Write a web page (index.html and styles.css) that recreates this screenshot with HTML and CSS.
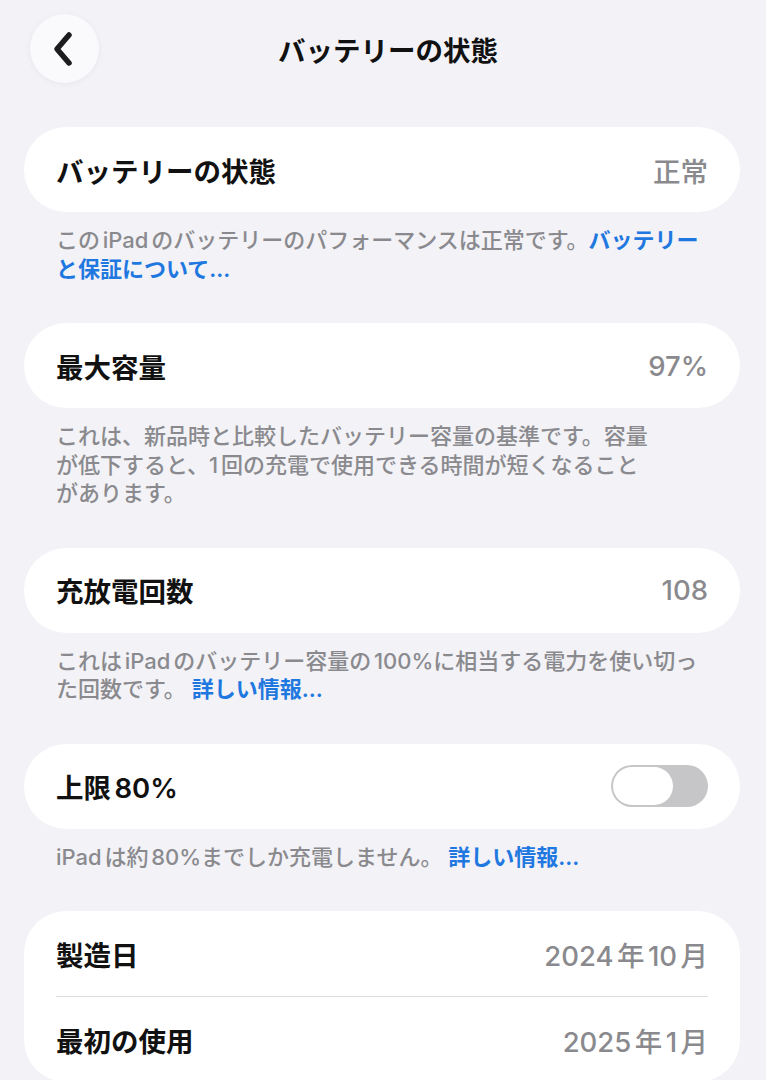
FILE: index.html
```html
<!DOCTYPE html>
<html lang="ja">
<head>
  <meta charset="utf-8">
  <title>バッテリーの状態</title>
  <link rel="stylesheet" href="styles.css">
</head>
<body>
  <div class="header">
    <button class="back" aria-label="戻る">
      <svg width="22" height="36" viewBox="0 0 22 36">
        <path d="M17 4 L5 18 L17 32" fill="none" stroke="#1c1c1e" stroke-width="5.5" stroke-linecap="round" stroke-linejoin="round"/>
      </svg>
    </button>
    <h1>バッテリーの状態</h1>
    <div></div>
  </div>

  <div class="content">
    <div class="card">
      <div class="row">
        <span class="label">バッテリーの状態</span>
        <span class="value">正常</span>
      </div>
    </div>
    <p class="note">このiPadのバッテリーのパフォーマンスは正常です。<a href="#">バッテリー<br>と保証について...</a></p>

    <div class="card">
      <div class="row">
        <span class="label">最大容量</span>
        <span class="value">97%</span>
      </div>
    </div>
    <p class="note">これは、新品時と比較したバッテリー容量の基準です。容量<br>が低下すると、1回の充電で使用できる時間が短くなること<br>があります。</p>

    <div class="card">
      <div class="row">
        <span class="label">充放電回数</span>
        <span class="value">108</span>
      </div>
    </div>
    <p class="note">これはiPadのバッテリー容量の100%に相当する電力を使い切っ<br>た回数です。 <a href="#">詳しい情報...</a></p>

    <div class="card">
      <div class="row">
        <span class="label">上限80%</span>
        <span class="toggle"><span class="knob"></span></span>
      </div>
    </div>
    <p class="note">iPadは約80%までしか充電しません。 <a href="#">詳しい情報...</a></p>

    <div class="card">
      <div class="row">
        <span class="label">製造日</span>
        <span class="value">2024年10月</span>
      </div>
      <div class="row">
        <span class="label">最初の使用</span>
        <span class="value">2025年1月</span>
      </div>
    </div>
  </div>
</body>
</html>
```

FILE: styles.css
```css
body {
  margin: 0;
  background: #f2f2f7;
  font-family: Inter, "Noto Sans CJK JP", sans-serif;
  color: #111;
  text-autospace: normal;
}

.header {
  display: grid;
  grid-template-columns: 69px 1fr 69px;
  align-items: center;
  padding: 14px 20px 0 30px;
}

.header h1 {
  margin: 0;
  text-align: center;
  font-size: 27.5px;
  font-weight: 700;
  color: #111;
}

.back {
  width: 69px;
  height: 69px;
  border: none;
  border-radius: 50%;
  background: #fafafc;
  box-shadow: 0 1px 6px rgba(0, 0, 0, 0.05);
  display: flex;
  align-items: center;
  justify-content: center;
  padding: 0 4px 0 0;
}

.content {
  padding: 44px 26px 0 24px;
}

.card {
  background: #fff;
  border-radius: 42px;
  padding: 0 32px;
}

.row {
  height: 85px;
  display: flex;
  align-items: center;
  justify-content: space-between;
}

.row + .row {
  border-top: 1px solid #dedee0;
}

.label {
  font-size: 27.5px;
  font-weight: 600;
}

.value {
  font-size: 27.5px;
  font-weight: 500;
  color: #8a8a8e;
}

.note {
  margin: 0;
  padding: 14px 32px 40px;
  font-size: 22px;
  line-height: 28.5px;
  font-weight: 500;
  color: #8a8a8e;
}

.note a {
  color: #1f78e0;
  font-weight: 600;
  text-decoration: none;
}

.toggle {
  width: 97px;
  height: 42px;
  border-radius: 21px;
  background: #c6c6c8;
  display: flex;
  align-items: center;
  padding: 0 2px;
  box-sizing: border-box;
}

.knob {
  width: 60px;
  height: 38px;
  border-radius: 19px;
  background: #fff;
}
```
